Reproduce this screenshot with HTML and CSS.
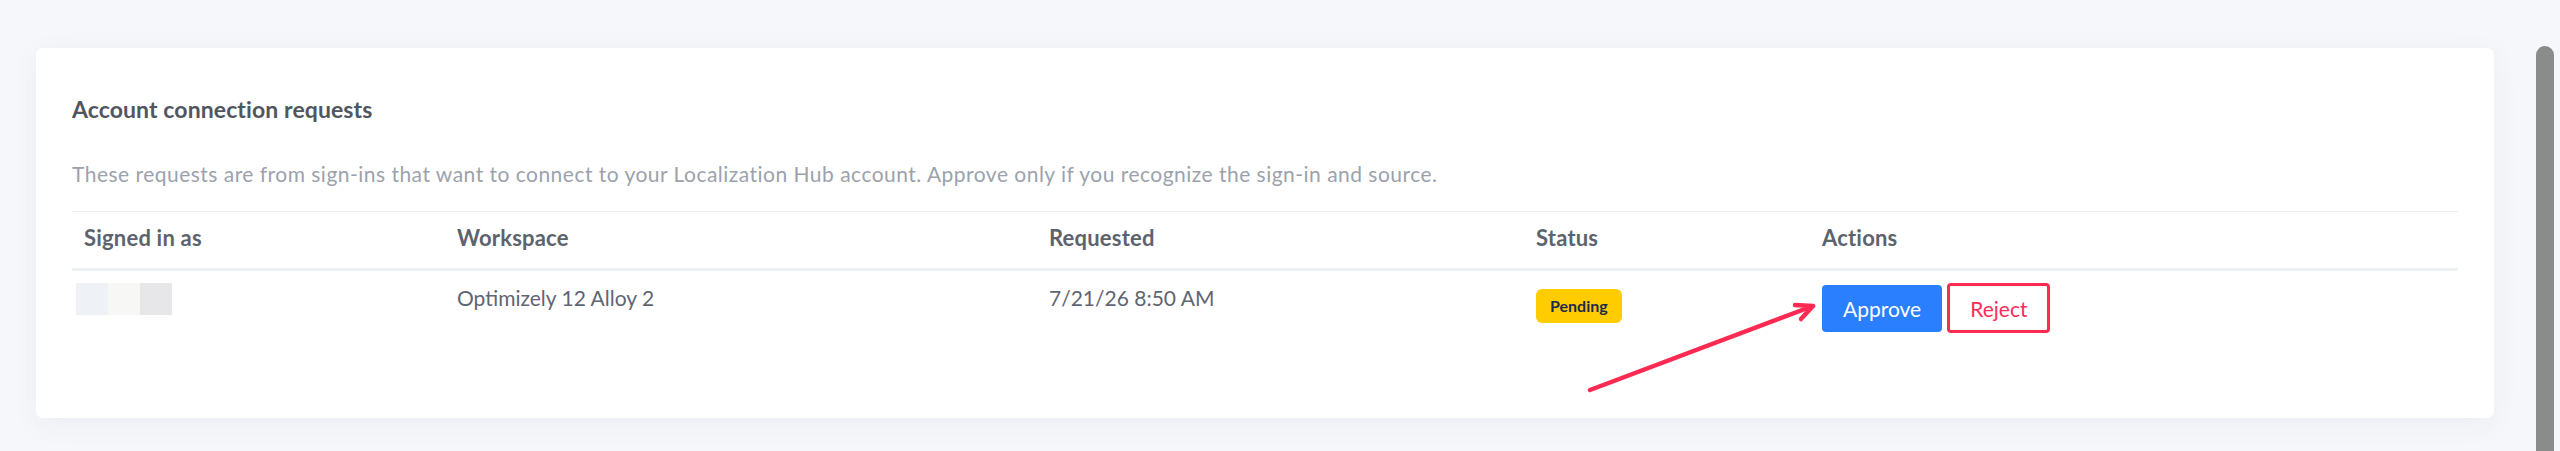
FILE: index.html
```html
<!DOCTYPE html>
<html lang="en">
<head>
<meta charset="utf-8">
<title>Account connection requests</title>
<link rel="stylesheet" href="styles.css">
</head>
<body>
<div class="page">
  <main class="content">
    <section class="card">
      <h2 class="card-title">Account connection requests</h2>
      <p class="card-desc">These requests are from sign-ins that want to connect to your Localization Hub account. Approve only if you recognize the sign-in and source.</p>
      <div class="table">
        <div class="row head">
          <div class="cell">Signed in as</div>
          <div class="cell">Workspace</div>
          <div class="cell">Requested</div>
          <div class="cell">Status</div>
          <div class="cell">Actions</div>
        </div>
        <div class="row body">
          <div class="cell">
            <div class="redacted"><span class="px px1"></span><span class="px px2"></span><span class="px px3"></span></div>
          </div>
          <div class="cell">Optimizely 12 Alloy 2</div>
          <div class="cell">7/21/26 8:50 AM</div>
          <div class="cell"><span class="badge">Pending</span></div>
          <div class="cell">
            <div class="actions">
              <button class="btn btn-approve" type="button">Approve</button>
              <button class="btn btn-reject" type="button">Reject</button>
            </div>
          </div>
        </div>
      </div>
    </section>
  </main>
  <div class="scrollbar"><div class="thumb"></div></div>
</div>
<svg class="annotation" width="260" height="110" viewBox="1575 295 260 110" aria-hidden="true">
  <g fill="none" stroke="#ff2a52" stroke-width="4.5" stroke-linecap="round" stroke-linejoin="round">
    <line x1="1590" y1="390" x2="1813" y2="306"/>
    <polyline points="1795,305 1813,306 1801,319"/>
  </g>
</svg>
</body>
</html>
```

FILE: styles.css
```css
* { box-sizing: border-box; }

html, body {
  margin: 0;
  padding: 0;
  height: 451px;
  overflow: hidden;
}

body {
  background: #f6f7fa;
  font-family: Lato, "Open Sans", "Liberation Sans", sans-serif;
  color: #5e6470;
  position: relative;
}

.page {
  display: flex;
  width: 2560px;
  height: 451px;
}

.content {
  flex: 1;
  padding: 48px 0 0 36px;
}

.card {
  width: 2458px;
  height: 370px;
  background: #ffffff;
  border-radius: 7px;
  box-shadow: 0 6px 28px rgba(40, 50, 90, 0.05);
  padding: 46px 36px 0;
}

.card-title {
  margin: 0 0 34px;
  font-size: 23px;
  line-height: 30px;
  font-weight: 700;
  letter-spacing: 0.1px;
  color: #50565f;
}

.card-desc {
  margin: 0 0 21px;
  font-size: 21px;
  line-height: 32px;
  letter-spacing: 0.48px;
  color: #9ca2ab;
}

.table {
  border-top: 1px solid #eceef3;
}

.row {
  display: grid;
  grid-template-columns: 373px 592px 487px 286px 1fr;
}

.row.head {
  border-bottom: 3px solid #edf0f5;
}

.cell {
  font-size: 21px;
  line-height: 32px;
  padding: 0 12px;
}

.head .cell {
  padding-top: 10px;
  padding-bottom: 14px;
  font-size: 22px;
  letter-spacing: 0.2px;
  font-weight: 700;
  color: #5d636d;
}

.body .cell {
  padding-top: 11px;
  color: #5f6572;
}

.redacted {
  display: flex;
  margin: 1px 0 0 -8px;
}

.px {
  display: block;
  width: 32px;
  height: 32px;
}

.px1 { background: #eef2f6; }
.px2 { background: #f7f7f6; }
.px3 { background: #e7e7ea; }

.badge {
  display: inline-block;
  margin-top: 7px;
  padding: 0 14px;
  height: 34px;
  line-height: 34px;
  border-radius: 6px;
  background: #ffcc00;
  color: #1d2b4a;
  font-size: 16px;
  font-weight: 700;
  vertical-align: top;
}

.actions {
  display: flex;
  align-items: center;
  gap: 5px;
  margin-top: 1px;
}

.btn {
  font-family: inherit;
  font-size: 21px;
  line-height: 1;
  border-radius: 4px;
  cursor: pointer;
}

.btn-approve {
  height: 47px;
  padding: 0 21px;
  border: 0;
  background: #2a7ffe;
  color: #ffffff;
}

.btn-reject {
  height: 50px;
  padding: 0 20px;
  border: 3px solid #ff2a50;
  background: #ffffff;
  color: #ff2d55;
}

.scrollbar {
  width: 18px;
  margin: 46px 6px 0 42px;
}

.thumb {
  width: 18px;
  height: 405px;
  background: #8b8b8b;
  border-radius: 9px 9px 0 0;
}

.annotation {
  position: absolute;
  left: 1575px;
  top: 295px;
  pointer-events: none;
}
```
